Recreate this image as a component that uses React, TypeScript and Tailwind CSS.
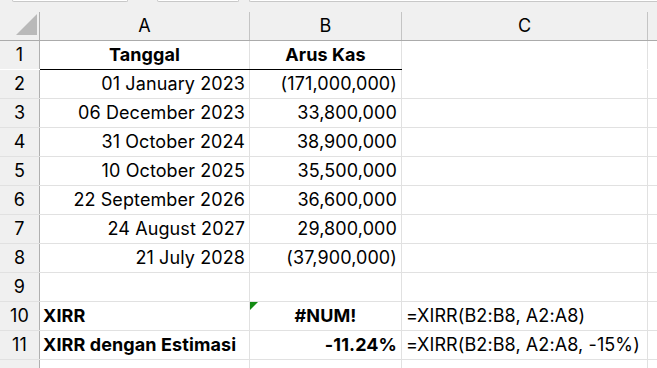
import React from 'react';

const font = { fontFamily: 'Inter, "Noto Sans", "Liberation Sans", sans-serif' };

type Row = { a: string; b: string; c?: string; bold?: boolean; center?: boolean; flag?: boolean; header?: boolean };

const rows: Row[] = [
  { a: 'Tanggal', b: 'Arus Kas', header: true },
  { a: '01 January 2023', b: '(171,000,000)' },
  { a: '06 December 2023', b: '33,800,000' },
  { a: '31 October 2024', b: '38,900,000' },
  { a: '10 October 2025', b: '35,500,000' },
  { a: '22 September 2026', b: '36,600,000' },
  { a: '24 August 2027', b: '29,800,000' },
  { a: '21 July 2028', b: '(37,900,000)' },
  { a: '', b: '' },
  { a: 'XIRR', b: '#NUM!', c: '=XIRR(B2:B8, A2:A8)', bold: true, center: true, flag: true },
  { a: 'XIRR dengan Estimasi', b: '-11.24%', c: '=XIRR(B2:B8, A2:A8, -15%)', bold: true },
];

const cols = 'grid grid-cols-[39px_1px_209px_1px_151px_1px_245px_1px_1fr]';

function GridRow({ r, n }: { r?: Row; n: number }) {
  return (
    <div className={`${cols} h-[29px] border-b ${n === 1 ? 'border-transparent' : 'border-[#e1e1e1]'} relative`}>
      {n === 1 && <div className="absolute left-[40px] bottom-[-1px] w-[362px] h-[1px] bg-black" />}
      <div className="bg-[#f0f0f0] flex items-end justify-center pb-[1px] leading-[26px]">{r ? n : ''}</div>
      <div className="bg-[#b0b0b0]" />
      <div
        className={`flex items-end pb-[1px] leading-[26px] whitespace-nowrap ${
          r?.header ? 'justify-center font-bold' : r?.bold ? 'justify-start pl-[3px] font-bold' : 'justify-end pr-[4px]'
        }`}
      >
        {r?.a}
      </div>
      <div className="bg-[#e1e1e1]" />
      <div
        className={`relative flex items-end pb-[1px] leading-[26px] whitespace-nowrap ${
          r?.header || r?.center ? 'justify-center font-bold' : r?.bold ? 'justify-end pr-[4px] font-bold' : 'justify-end pr-[4px]'
        }`}
      >
        {r?.flag && (
          <div
            className="absolute left-0 top-0 w-[8px] h-[8px] bg-[#138a13]"
            style={{ clipPath: 'polygon(0 0, 100% 0, 0 100%)' }}
          />
        )}
        {r?.b}
      </div>
      <div className="bg-[#e1e1e1]" />
      <div className="flex items-end pb-[1px] pl-[4px] leading-[26px] whitespace-nowrap">{r?.c}</div>
      <div className="bg-[#e1e1e1]" />
      <div />
    </div>
  );
}

export default function App() {
  return (
    <div className="w-[657px] h-[368px] overflow-hidden bg-white text-[18px] tracking-[0.1px] text-black" style={font}>
      {/* tab strip */}
      <div className="h-[12px] bg-[#f0f0f0] flex">
        <div className="ml-[12px] w-[116px] h-[2px] bg-white border-x border-b border-[#c8c8c8] rounded-b-[4px]" />
        <div className="ml-[29px] w-[82px] h-[2px] bg-white border-x border-b border-[#c8c8c8] rounded-b-[4px]" />
        <div className="ml-[10px] flex-1 h-[2px] bg-white border-l border-b border-[#c8c8c8] rounded-bl-[4px]" />
      </div>

      {/* column headers */}
      <div className={`${cols} h-[29px] bg-[#f0f0f0] border-b border-[#ababab]`}>
        <div className="relative">
          <div
            className="absolute left-[16px] top-[2px] w-[21px] h-[21px] bg-[#b9b9b9]"
            style={{ clipPath: 'polygon(100% 0, 100% 100%, 0 100%)' }}
          />
        </div>
        <div className="bg-[#b0b0b0]" />
        <div className="flex items-end justify-center pb-[1px]">A</div>
        <div className="bg-[#c4c4c4]" />
        <div className="flex items-end justify-center pb-[1px]">B</div>
        <div className="bg-[#c4c4c4]" />
        <div className="flex items-end justify-center pb-[1px]">C</div>
        <div className="bg-[#c4c4c4]" />
        <div />
      </div>

      {rows.map((r, i) => (
        <GridRow key={i} r={r} n={i + 1} />
      ))}
      <GridRow n={12} />
    </div>
  );
}
